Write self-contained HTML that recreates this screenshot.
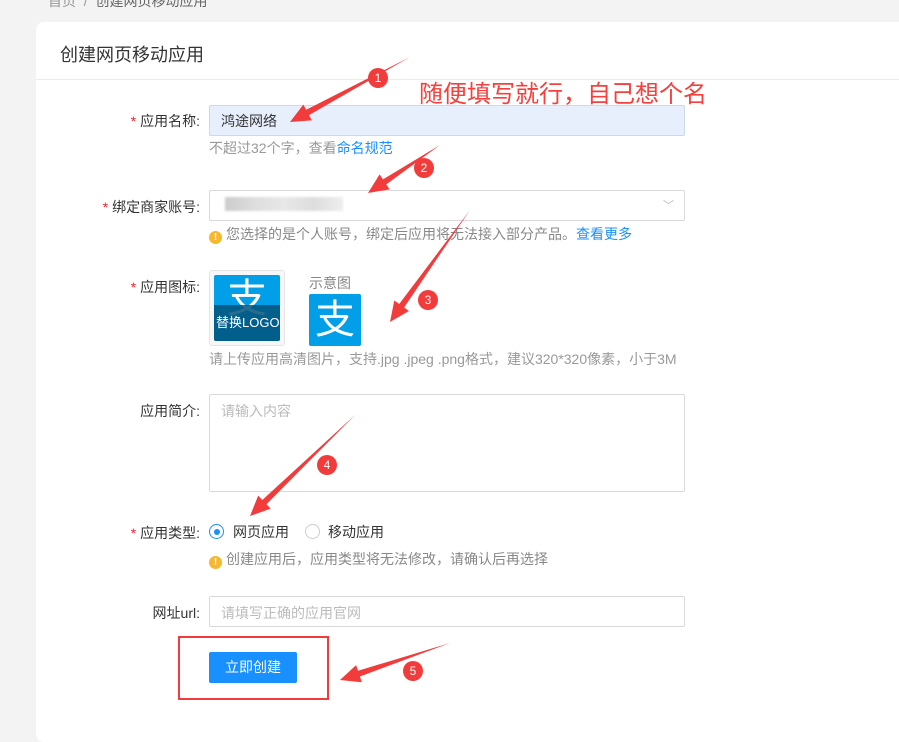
<!DOCTYPE html>
<html><head><meta charset="utf-8"><style>
body{margin:0;width:899px;height:714px;background:#f3f3f3;font-family:"Liberation Sans","Noto Sans CJK SC",sans-serif;position:relative;overflow:hidden;color:#333}
.a{position:absolute;white-space:nowrap}
.card{position:absolute;left:36px;top:22px;width:880px;height:720px;background:#fff;border-radius:8px}
.lbl{font-size:14px;color:#333;text-align:right;width:200px;left:0}
.lbl i{color:#f5222d;font-style:normal;margin-right:4px}
.inp{position:absolute;left:209px;width:474px;height:29px;border:1px solid #d9d9d9;border-radius:2px;background:#fff}
.hint{font-size:14px;color:#999}
.warn{display:inline-block;width:13px;height:13px;border-radius:50%;background:#f5b82e;color:#fff;font-size:10px;text-align:center;line-height:13px;margin-right:4px;vertical-align:-1px;font-weight:bold}
</style></head><body>
<div class="a" style="left:48px;top:-9px;font-size:14px;color:#999">首页 &nbsp;/ &nbsp;<span style="color:#666">创建网页移动应用</span></div>
<div class="card"></div>
<div class="a" style="left:60px;top:41px;font-size:18px;color:#333">创建网页移动应用</div>
<div class="a" style="left:36px;top:79px;width:870px;height:1px;background:#ebebeb"></div>

<div class="a lbl" style="top:111px"><i>*</i>应用名称:</div>
<div class="inp" style="top:105px;background:#e8effc;border-color:#cdd8ea"></div>
<div class="a" style="left:221px;top:111px;font-size:14px">鸿途网络</div>
<div class="a hint" style="left:209px;top:138px">不超过32个字，查看<span style="color:#1890ff">命名规范</span></div>

<div class="a lbl" style="top:197px"><i>*</i>绑定商家账号:</div>
<div class="inp" style="top:190px"></div>
<div class="a" style="left:225px;top:197px;width:118px;height:14px;background:linear-gradient(90deg,#ccc,#ddd,#e8e8e8,#ddd,#eee);filter:blur(1px)"></div>
<div class="a" style="left:663px;top:197px;font-size:11px;color:#bbb">﹀</div>
<div class="a hint" style="left:209px;top:224px;color:#888"><span class="warn">!</span>您选择的是个人账号，绑定后应用将无法接入部分产品。<span style="color:#1890ff">查看更多</span></div>

<div class="a lbl" style="top:277px"><i>*</i>应用图标:</div>
<div class="a" style="left:209px;top:270px;width:74px;height:74px;border:1px solid #e5e5e5;border-radius:3px;background:#f7f7f7"></div>
<div class="a" style="left:214px;top:275px;width:66px;height:66px;background:#009fe8;overflow:hidden;border-radius:2px">
<div class="a" style="left:13px;top:2px;font-size:40px;line-height:44px;color:#fff">支</div>
<div class="a" style="left:0;top:30px;width:66px;height:36px;background:#02527a;opacity:.85"></div>
<div class="a" style="left:2px;top:37px;font-size:13px;color:#fff">替换LOGO</div></div>
<div class="a" style="left:309px;top:273px;font-size:14px;color:#888">示意图</div>
<div class="a" style="left:309px;top:294px;width:52px;height:52px;background:#009fe8;border-radius:2px;overflow:hidden"><div class="a" style="left:6px;top:4px;font-size:40px;color:#fff;line-height:44px">支</div></div>
<div class="a hint" style="left:209px;top:349px">请上传应用高清图片，支持.jpg .jpeg .png格式，建议320*320像素，小于3M</div>

<div class="a lbl" style="top:401px">应用简介:</div>
<div class="inp" style="top:394px;height:96px"></div>
<div class="a" style="left:221px;top:401px;font-size:14px;color:#bbb">请输入内容</div>

<div class="a lbl" style="top:523px"><i>*</i>应用类型:</div>
<div class="a" style="left:209px;top:524px;width:13px;height:13px;border:1px solid #1890ff;border-radius:50%"><div style="margin:3.5px;width:6px;height:6px;border-radius:50%;background:#1890ff"></div></div>
<div class="a" style="left:233px;top:522px;font-size:14px">网页应用</div>
<div class="a" style="left:305px;top:524px;width:13px;height:13px;border:1px solid #ccc;border-radius:50%"></div>
<div class="a" style="left:328px;top:522px;font-size:14px">移动应用</div>
<div class="a hint" style="left:209px;top:549px;color:#888"><span class="warn">!</span>创建应用后，应用类型将无法修改，请确认后再选择</div>

<div class="a lbl" style="top:603px">网址url:</div>
<div class="inp" style="top:596px"></div>
<div class="a" style="left:221px;top:603px;font-size:14px;color:#bbb">请填写正确的应用官网</div>

<div class="a" style="left:209px;top:652px;width:88px;height:31px;background:#1890ff;border-radius:2px;color:#fff;font-size:14px;text-align:center;line-height:31px">立即创建</div>
<div class="a" style="left:178px;top:636px;width:147px;height:60px;border:2px solid #f23b3b"></div>

<div class="a" style="left:419px;top:74px;font-size:24px;color:#f5403d">随便填写就行，自己想个名</div>

<svg id="s" class="a" style="left:0;top:0" width="899" height="714"></svg>
<script>
var A=[[410,57,290,122],[440,145,368,193],[470,210,390,322],[355,415,250,516],[450,643,340,680]];
var C=[[378,78,1],[424,168,2],[428,300,3],[327,465,4],[413,671,5]];
var h='';
A.forEach(function(a){var dx=a[2]-a[0],dy=a[3]-a[1],L=Math.hypot(dx,dy),ux=dx/L,uy=dy/L,px=-uy,py=ux;
var hl=20,bx=a[2]-ux*hl,by=a[3]-uy*hl,nx=a[2]-ux*(hl-6),ny=a[3]-uy*(hl-6);
var p=[[a[0],a[1]],[bx+px*3,by+py*3],[bx+px*9,by+py*9],[a[2],a[3]],[bx-px*9,by-py*9],[bx-px*3,by-py*3]];
h+='<polygon fill="#f23b3b" points="'+p.map(function(q){return q[0].toFixed(1)+','+q[1].toFixed(1)}).join(' ')+'"/>';});
C.forEach(function(c){h+='<circle fill="#f23b3b" cx="'+c[0]+'" cy="'+c[1]+'" r="10"/><text fill="#fff" font-size="12" font-family="Liberation Sans" text-anchor="middle" x="'+c[0]+'" y="'+(c[1]+4)+'">'+c[2]+'</text>';});
document.getElementById('s').innerHTML=h;
</script>
</body></html>
